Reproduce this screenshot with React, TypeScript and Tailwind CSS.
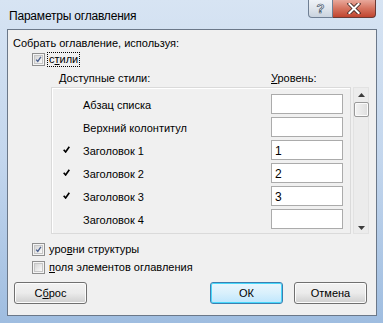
import React from "react";

function Check({ checked }: { checked: boolean }) {
  return (
    <div className="w-[13px] h-[13px] border border-[#8f8f8f] bg-[#f4f4f4] p-[1px] shrink-0">
      <div className="w-full h-full border border-[#c6c6c6] bg-gradient-to-br from-[#d6d6d6] to-[#fbfbfb] relative">
        {checked && (
          <svg viewBox="0 0 9 9" className="absolute inset-0 w-full h-full">
            <path d="M1.5 4.6 L3.6 7 L7.6 1.2" fill="none" stroke="#4a5f8d" strokeWidth="1.7" />
          </svg>
        )}
      </div>
    </div>
  );
}

function Tick() {
  return (
    <svg viewBox="0 0 8 8" className="w-[7px] h-[7px]">
      <path d="M0.8 4.2 L3 6.8 L7.2 0.8" fill="none" stroke="#000" strokeWidth="1.9" />
    </svg>
  );
}

function Btn({ children, def }: { children: React.ReactNode; def?: boolean }) {
  return (
    <div
      className={
        "w-[73px] h-[22px] rounded-[3px] border flex items-center justify-center text-[11px] text-black " +
        (def
          ? "border-[#3c7fb1] bg-gradient-to-b from-[#eaf6fd] via-[#d9f0fc] to-[#bee6fd] shadow-[inset_0_0_0_1px_#48d8fb]"
          : "border-[#707070] bg-gradient-to-b from-[#f2f2f2] via-[#ebebeb] to-[#cfcfcf] shadow-[inset_0_0_0_1px_#fcfcfc]")
      }
    >
      {children}
    </div>
  );
}

const rows: { name: string; checked: boolean; level: string }[] = [
  { name: "Абзац списка", checked: false, level: "" },
  { name: "Верхний колонтитул", checked: false, level: "" },
  { name: "Заголовок 1", checked: true, level: "1" },
  { name: "Заголовок 2", checked: true, level: "2" },
  { name: "Заголовок 3", checked: true, level: "3" },
  { name: "Заголовок 4", checked: false, level: "" },
];

export default function App() {
  return (
    <div
      className="w-[383px] h-[323px] flex flex-col bg-gradient-to-b from-[#d7e4f3] via-[#c3d6ed] to-[#9fbde0] text-black overflow-hidden"
      style={{ fontFamily: '"Liberation Sans", Arial, sans-serif' }}
    >
      {/* title bar */}
      <div className="h-[29px] flex items-start pl-[9px] pr-[7px] shrink-0">
        <div className="text-[12px] leading-[16px] pt-[8px] flex-1 tracking-[-0.2px]">Параметры оглавления</div>
        <div className="flex">
          <div className="w-[25px] h-[18px] rounded-bl-[4px] border border-t-0 border-[#6f7f94] bg-gradient-to-b from-[#eef2f7] via-[#dfe5ec] to-[#c9d3df] flex items-center justify-center">
            <span
              className="text-[13px] font-bold leading-none text-[#f4f6f9]"
              style={{ WebkitTextStroke: "0.7px #45566b" }}
            >
              ?
            </span>
          </div>
          <div className="w-[43px] h-[18px] rounded-br-[4px] border border-t-0 border-l-0 border-[#6b3a34] bg-gradient-to-b from-[#e8a89b] via-[#d5735f] to-[#c0442f] flex items-center justify-center">
            <svg viewBox="0 0 14 12" className="w-[14px] h-[11px]">
              <path d="M2 1 L12 11 M12 1 L2 11" stroke="#3e2420" strokeWidth="4" strokeLinecap="square" />
              <path d="M2 1 L12 11 M12 1 L2 11" stroke="#ffffff" strokeWidth="2.2" strokeLinecap="square" />
            </svg>
          </div>
        </div>
      </div>

      {/* client area */}
      <div className="mx-[7px] w-[370px] h-[287px] border border-[#6b7889] bg-[#f0f0f0] flex flex-col text-[11px] leading-[16px]">
        <div className="pl-[5px] pt-[5px]">Собрать оглавление, используя:</div>

        <div className="flex items-center pl-[24px] mt-[1px] h-[14px]">
          <Check checked />
          <div className="ml-[2px] px-[1px] h-[15px] leading-[13px] outline-1 outline-dotted outline-[#000] -outline-offset-1 border border-transparent">
            с<span className="underline">т</span>или
          </div>
        </div>

        <div className="flex pl-[51px] mt-[4px]">
          <div className="w-[212px]">Доступные стили:</div>
          <div>
            <span className="underline">У</span>ровень:
          </div>
        </div>

        <div className="flex ml-[43px] mt-[1px] h-[147px]">
          <div className="w-[300px] border border-[#dadada] shadow-[inset_1px_1px_0_#ffffff] flex flex-col pt-[6px] gap-[3px]">
            {rows.map((r) => (
              <div key={r.name} className="flex items-center h-[20px]">
                <div className="w-[31px] pl-[11px] flex items-center -mt-[2px]">{r.checked && <Tick />}</div>
                <div className="w-[188px] pt-[1px]">{r.name}</div>
                <div className="w-[72px] h-[20px] border border-[#ababab] bg-white pl-[3px] pt-[1px] flex items-center text-[12px]">
                  {r.level}
                </div>
              </div>
            ))}
          </div>
          <div className="ml-[2px] w-[16px] border border-[#e2e2e2] bg-[#ececec] flex flex-col items-center pt-[5px] pb-[3px]">
            <svg viewBox="0 0 7 4" className="w-[7px] h-[4px]">
              <path d="M0 4 L3.5 0 L7 4 Z" fill="#3c3c3c" />
            </svg>
            <div className="mt-[5px] w-[15px] h-[15px] rounded-[2px] border border-[#9a9a9a] bg-gradient-to-r from-[#f3f3f3] to-[#dedede] shadow-[inset_0_0_0_1px_#fbfbfb]" />
            <div className="flex-1" />
            <svg viewBox="0 0 7 4" className="w-[7px] h-[4px]">
              <path d="M0 0 L3.5 4 L7 0 Z" fill="#3c3c3c" />
            </svg>
          </div>
        </div>

        <div className="flex items-center pl-[24px] mt-[7px] h-[16px]">
          <Check checked />
          <div className="ml-[4px]">
            уро<span className="underline">в</span>ни структуры
          </div>
        </div>
        <div className="flex items-center pl-[24px] mt-[2px] h-[16px]">
          <Check checked={false} />
          <div className="ml-[4px]">
            <span className="underline">п</span>оля элементов оглавления
          </div>
        </div>

        <div className="flex pl-[6px] mt-[7px]">
          <Btn>
            С<span className="underline">б</span>рос
          </Btn>
          <div className="ml-[123px]">
            <Btn def>ОК</Btn>
          </div>
          <div className="ml-[11px]">
            <Btn>Отмена</Btn>
          </div>
        </div>
      </div>
    </div>
  );
}
